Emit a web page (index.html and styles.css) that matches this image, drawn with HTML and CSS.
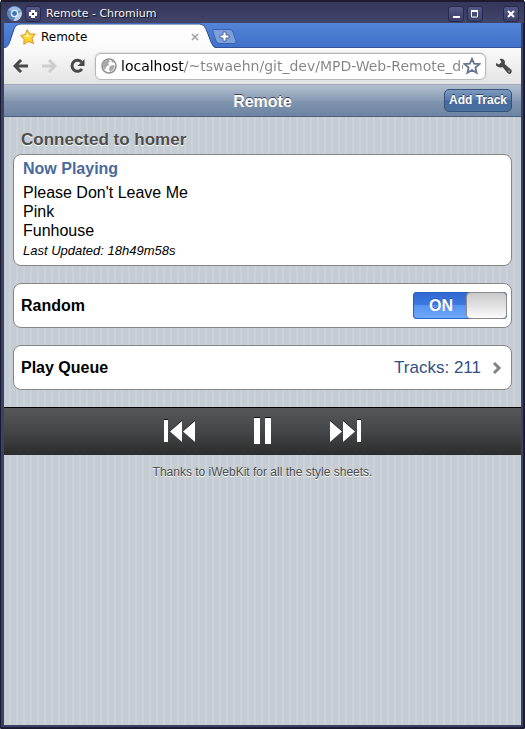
FILE: index.html
```html
<!DOCTYPE html>
<html lang="en">
<head>
<meta charset="utf-8">
<title>Remote</title>
<link rel="stylesheet" href="styles.css">
</head>
<body>
<div class="window">
  <div class="titlebar">
    <svg class="app-icon" width="15" height="15" viewBox="0 0 14 14" aria-hidden="true">
      <circle cx="7" cy="7" r="7" fill="#5b86bb"/>
      <path d="M1 4A7 7 0 0 1 13.500 5H7Z" fill="#9dbbdc"/>
      <path d="M13.500 5A7 7 0 0 1 6 14L9 8Z" fill="#b9d0e8"/>
      <circle cx="7" cy="7" r="3.500" fill="#e4eef8"/>
      <circle cx="7" cy="7" r="2.300" fill="#3d76b8"/>
    </svg>
    <button class="win-btn" aria-label="Pin window">
      <svg width="8" height="8" viewBox="0 0 8 8"><path d="M2 0h4v2h2v4H6v2H2V6H0V2h2z" fill="#fff"/><path d="M3 3h2v2H3z" fill="#353660"/></svg>
    </button>
    <span class="window-title">Remote - Chromium</span>
    <button class="win-btn" aria-label="Minimize">
      <svg width="8" height="8" viewBox="0 0 8 8"><path d="M1 6h7v2H1z" fill="#fff"/></svg>
    </button>
    <button class="win-btn" aria-label="Maximize">
      <svg width="8" height="8" viewBox="0 0 8 8"><path d="M.5 1v6h6V1z" fill="none" stroke="#fff"/><path d="M0 0h7v2H0z" fill="#fff"/></svg>
    </button>
    <button class="win-btn win-close" aria-label="Close window">
      <svg width="8" height="8" viewBox="0 0 8 8"><path d="M1 1l6 6M7 1L1 7" stroke="#fff" stroke-width="2"/></svg>
    </button>
  </div>

  <div class="browser">
    <div class="tabstrip">
      <svg class="tab-shape" width="213" height="25" viewBox="0 0 213 25" aria-hidden="true">
        <defs><linearGradient id="tabfill" x1="0" y1="0" x2="0" y2="1"><stop offset="0" stop-color="#fff"/><stop offset="1" stop-color="#fafafa"/></linearGradient></defs>
        <path d="M0 25C4 24 5 21 6 18L10 6Q12 1 17 1H196Q200 1 202 6L207 19Q209 25 213 25Z" fill="url(#tabfill)"/>
        <path d="M0 25C4 24 5 21 6 18L10 6Q12 1 17 1H196Q200 1 202 6L207 19Q209 25 213 25" fill="none" stroke="#2a4f96"/>
      </svg>
      <div class="tab">
        <svg width="16" height="16" viewBox="0 0 16 16" aria-hidden="true">
          <path d="M7 .8L9.800 5l5.400 0L12 9.200l1.500 5.300-5-2L3.800 15.300l.3-5.100L.8 6.500l4.600-1.100z" fill="#ffd32b" stroke="#dc9223" stroke-linejoin="round"/>
          <path d="M7.200 2.800L9 6.200l4 0-5 2.200-5.500-1.500 3.700-.8z" fill="#fff08a"/>
        </svg>
        <span class="tab-title">Remote</span>
        <button class="tab-close" aria-label="Close tab">
          <svg width="8" height="8" viewBox="0 0 8 8"><path d="M1 1l6 6M7 1L1 7" stroke="#a0a0a0" stroke-width="1.500"/></svg>
        </button>
      </div>
      <button class="new-tab" aria-label="New tab">
        <svg width="25" height="15" viewBox="0 0 25 15">
          <path d="M2 .5H18Q20 .5 21 3L24 12Q24.500 14.500 22 14.500H8Q5 14.500 4 12L1 3Q.5.5 2 .5Z" fill="#7d9fdb" stroke="#3a62b2"/>
          <path d="M11 3h3v3h3v3h-3v3h-3V9H8V6h3z" fill="#fff" stroke="#50679a"/>
        </svg>
      </button>
    </div>

    <div class="toolbar">
      <button class="tool" aria-label="Back">
        <svg width="16" height="14" viewBox="0 0 16 14"><path d="M8 1L2 7l6 6M2.500 7H15" fill="none" stroke="#484848" stroke-width="3"/></svg>
      </button>
      <button class="tool" aria-label="Forward">
        <svg width="16" height="14" viewBox="0 0 16 14"><path d="M8 1l6 6-6 6M13.500 7H1" fill="none" stroke="#cecece" stroke-width="3"/></svg>
      </button>
      <button class="tool" aria-label="Reload">
        <svg width="16" height="16" viewBox="0 0 16 16"><path d="M12.500 4A5.500 5.500 0 1 0 13 11" fill="none" stroke="#484848" stroke-width="3"/><path d="M15.500 1v7H8.500z" fill="#484848"/></svg>
      </button>
      <div class="omnibox">
        <svg width="16" height="16" viewBox="0 0 16 16" aria-hidden="true">
          <circle cx="8" cy="8" r="7" fill="#fff" stroke="#8e8e8e" stroke-width="1.500"/>
          <path d="M2 5Q4 1.500 8 2l1 2-2 1 1 2-3 2-1 3Q1 9 2 5zM9 8l3-1 2 1-2 4-3 2-1-3zM10 2l3 2-2 1z" fill="#a9a9a9"/>
        </svg>
        <input class="url" type="text" aria-label="Address" value="localhost/~tswaehn/git_dev/MPD-Web-Remote_de">
        <button class="bookmark" aria-label="Bookmark this page">
          <svg width="18" height="18" viewBox="0 0 18 18"><path d="M9 1.800l2.100 4.900 5.300.4-4 3.500 1.200 5.200L9 13l-4.600 2.800 1.200-5.200-4-3.500 5.300-.4z" fill="#fff" stroke="#66758f" stroke-width="1.800"/></svg>
        </button>
      </div>
      <button class="tool wrench" aria-label="Settings">
        <svg width="17" height="17" viewBox="0 0 17 17"><path d="M4.500 1Q9 0 10 4l-.3 2 6.300 5.500q1.500 1.500 0 3.500t-3.500 0L7.500 9Q4 10.500 1 7.500V5l3 1.500L6.500 4z" fill="#484848"/><circle cx="14" cy="13.200" r="1" fill="#999"/></svg>
      </button>
    </div>

    <div class="page">
      <header class="topbar">
        <h1>Remote</h1>
        <a class="add-track" href="#add">Add Track</a>
      </header>

      <main class="content">
        <h2 class="status">Connected to homer</h2>
        <section class="card now-playing">
          <h3>Now Playing</h3>
          <p>Please Don't Leave Me</p>
          <p>Pink</p>
          <p>Funhouse</p>
          <p class="updated">Last Updated: 18h49m58s</p>
        </section>

        <div class="card row">
          <label for="random">Random</label>
          <span class="switch">
            <input id="random" type="checkbox" checked>
            <span class="switch-text">ON</span>
          </span>
        </div>

        <a class="card row" href="#queue">
          <span>Play Queue</span>
          <span class="count">Tracks: 211</span>
          <svg class="chevron" width="10" height="14" viewBox="0 0 10 14" aria-hidden="true"><path d="M2 2l5 5-5 5" fill="none" stroke="#828282" stroke-width="3"/></svg>
        </a>
      </main>

      <nav class="player">
        <button aria-label="Previous track">
          <svg width="32" height="24" viewBox="0 0 32 24"><path d="M0 0h4v23H0zM18 1v22L6 12zM31 1v22L19 12z" fill="#111"/><path d="M0 1h4v22H0zM18 2v21L6 12.500zM31 2v21L19 12.500z" fill="#fff"/></svg>
        </button>
        <button aria-label="Pause">
          <svg width="18" height="28" viewBox="0 0 18 28"><path d="M0 0h6v27H0zM11 0h6v27h-6z" fill="#111"/><path d="M0 1h6v26H0zM11 1h6v26h-6z" fill="#fff"/></svg>
        </button>
        <button aria-label="Next track">
          <svg width="32" height="24" viewBox="0 0 32 24"><path d="M27 0h4v23h-4zM0 1v22l12-11zM13 1v22l12-11z" fill="#111"/><path d="M27 1h4v22h-4zM0 2v21l12-10.500zM13 2v21l12-10.500z" fill="#fff"/></svg>
        </button>
      </nav>

      <footer>Thanks to iWebKit for all the style sheets.</footer>
    </div>
  </div>
</div>
</body>
</html>
```
FILE: styles.css
```css
*, *::before { box-sizing: border-box; }

body {
  margin: 0;
  background: #fff;
  font-family: "Liberation Sans", Arial, sans-serif;
  font-size: 16px;
}

h1, h2, h3, p { margin: 0; font-size: 16px; }

button {
  display: grid;
  place-items: center;
  padding: 0;
  border: 0;
  background: none;
}

svg { display: block; }

a { text-decoration: none; }

.window {
  display: flex;
  flex-direction: column;
  min-height: 100vh;
  padding: 0 4px 4px;
  border-radius: 4px 4px 2px 2px;
  background: #3c3f66;
  box-shadow: inset 0 0 0 1px #1b1b30, inset -2px -2px 0 #202039;
}

/* Window frame */

.titlebar {
  display: flex;
  align-items: center;
  gap: 3px;
  height: 23px;
  margin: 0 -3px;
  padding: 2px 6px 0;
  border-top: 2px solid #1d1a30;
  background: linear-gradient(#34375a, #43466b);
}

.win-btn {
  width: 16px;
  height: 16px;
  border: 1px solid #282a4b;
  border-radius: 3px;
  background: linear-gradient(#535887, #3c4068);
}

.win-close { margin-left: 17px; margin-right: -1px; }

.window-title {
  flex: 1;
  padding-left: 2px;
  color: #f4f4f8;
  font: 11px "DejaVu Sans", sans-serif;
  text-shadow: 1px 1px 1px #11121f;
}

/* Browser */

.browser {
  flex: 1;
  display: flex;
  flex-direction: column;
}

.tabstrip {
  position: relative;
  display: flex;
  align-items: center;
  gap: 12px;
  height: 25px;
  background: linear-gradient(#5484d8, #4070c8);
  box-shadow: inset 0 -1px 0 #2f549c;
}

.tab-shape { position: absolute; left: 0; top: 0; }

.tab {
  position: relative;
  display: flex;
  align-items: center;
  gap: 5px;
  width: 196px;
  padding-left: 16px;
  padding-right: 1px;
  padding-top: 2px;
}

.tab-title {
  flex: 1;
  font: 12px "DejaVu Sans", sans-serif;
}

.new-tab { position: relative; padding-top: 2px; }

.toolbar {
  display: flex;
  align-items: center;
  height: 36px;
  padding: 0 10px 0 9px;
  gap: 12px;
  background: linear-gradient(#fafafa, #e3e3e3);
}

.tool { flex: none; width: 16px; height: 24px; }

.omnibox {
  flex: 1;
  display: flex;
  align-items: center;
  gap: 4px;
  min-width: 0;
  height: 27px;
  margin: 0 -3px 0 -2px;
  padding: 0 4px 0 5px;
  border: 1px solid #b8b8b8;
  border-radius: 6px;
  background: #fff;
  box-shadow: 0 0 0 1px #e2e2e2;
}

.omnibox svg { flex: none; }

.url {
  flex: 1;
  min-width: 0;
  height: 24px;
  padding: 0;
  border: 0;
  outline: 0;
  background: linear-gradient(90deg, #000 63px, #848484 63px);
  -webkit-background-clip: text;
  background-clip: text;
  color: transparent;
  font: 14px "DejaVu Sans", sans-serif;
}

.bookmark { margin-left: -4px; }

/* Remote page */

.page {
  flex: 1;
  background: repeating-linear-gradient(90deg, #c5ccd4 0 5px, #cbd2d8 5px 7px);
}

.topbar {
  display: grid;
  grid-template-columns: 1fr auto 1fr;
  align-items: center;
  height: 33px;
  padding: 0 9px;
  border-top: 1px solid #a3a9b8;
  border-bottom: 1px solid #4b5f7d;
  background: linear-gradient(#b2bfd0, #889bb3 50%, #8195af 50%, #6d84a2);
}

.topbar h1 {
  grid-column: 2;
  padding-top: 2px;
  color: #fff;
  text-shadow: 0 -1px 0 #3c4657;
}

.add-track {
  justify-self: end;
  padding: 0 4px;
  border: 1px solid #37527c;
  border-radius: 5px;
  background: linear-gradient(#7d99bd, #5478a8 50%, #476b9d 50%, #49709f);
  color: #fff;
  font-size: 12px;
  font-weight: bold;
  line-height: 21px;
  text-shadow: 0 -1px 0 #2e4567;
}

.content { padding: 13px 9px 17px; }

.status {
  padding: 0 8px 4px;
  color: #4d4d4d;
  font-size: 17px;
  line-height: 20px;
  text-shadow: 0 1px 0 #fff;
}

.card {
  border: 1px solid #878787;
  border-radius: 8px;
  background: #fff;
  color: #000;
}

.card + .card { margin-top: 17px; }

.now-playing { padding: 4px 9px 5px; line-height: 19px; }

.now-playing h3 {
  margin-bottom: 5px;
  color: #496a9b;
}

.now-playing .updated {
  padding-top: 1px;
  font-size: 13px;
  font-style: italic;
}

.row {
  display: flex;
  align-items: center;
  justify-content: space-between;
  height: 45px;
  padding: 0 4px 0 7px;
  font-weight: bold;
}

.switch { display: grid; }

.switch input {
  grid-area: 1 / 1;
  appearance: none;
  display: flex;
  justify-content: flex-end;
  width: 94px;
  height: 27px;
  margin: 0;
  border-radius: 4px;
  background: linear-gradient(#2f67d2, #3d7bdf 50%, #5594f3 50%, #70aaff);
  box-shadow: inset 0 0 0 1px #2c60bd;
}

.switch input::before {
  content: "";
  width: 41px;
  height: 27px;
  border: 1px solid #8b8b8b;
  border-radius: 4px;
  background: linear-gradient(#c9c9c9, #fbfbfb);
}

.switch-text {
  grid-area: 1 / 1;
  align-self: center;
  padding-left: 16px;
  color: #fff;
  text-shadow: 0 -1px 0 #2857a4;
  pointer-events: none;
}

.count {
  margin-left: auto;
  color: #324f85;
  font-size: 17px;
  font-weight: normal;
}

.chevron { margin-left: 11px; margin-right: 5px; }

.player {
  display: flex;
  align-items: center;
  justify-content: center;
  gap: 58px;
  height: 48px;
  padding-bottom: 2px;
  border-top: 1px solid #000;
  background: linear-gradient(#555759, #454648 50%, #2c2c2c);
}

footer {
  padding-top: 9px;
  color: #4d4d4d;
  font-size: 12px;
  line-height: 16px;
  text-align: center;
  text-shadow: 0 1px 0 #fff;
}
```
